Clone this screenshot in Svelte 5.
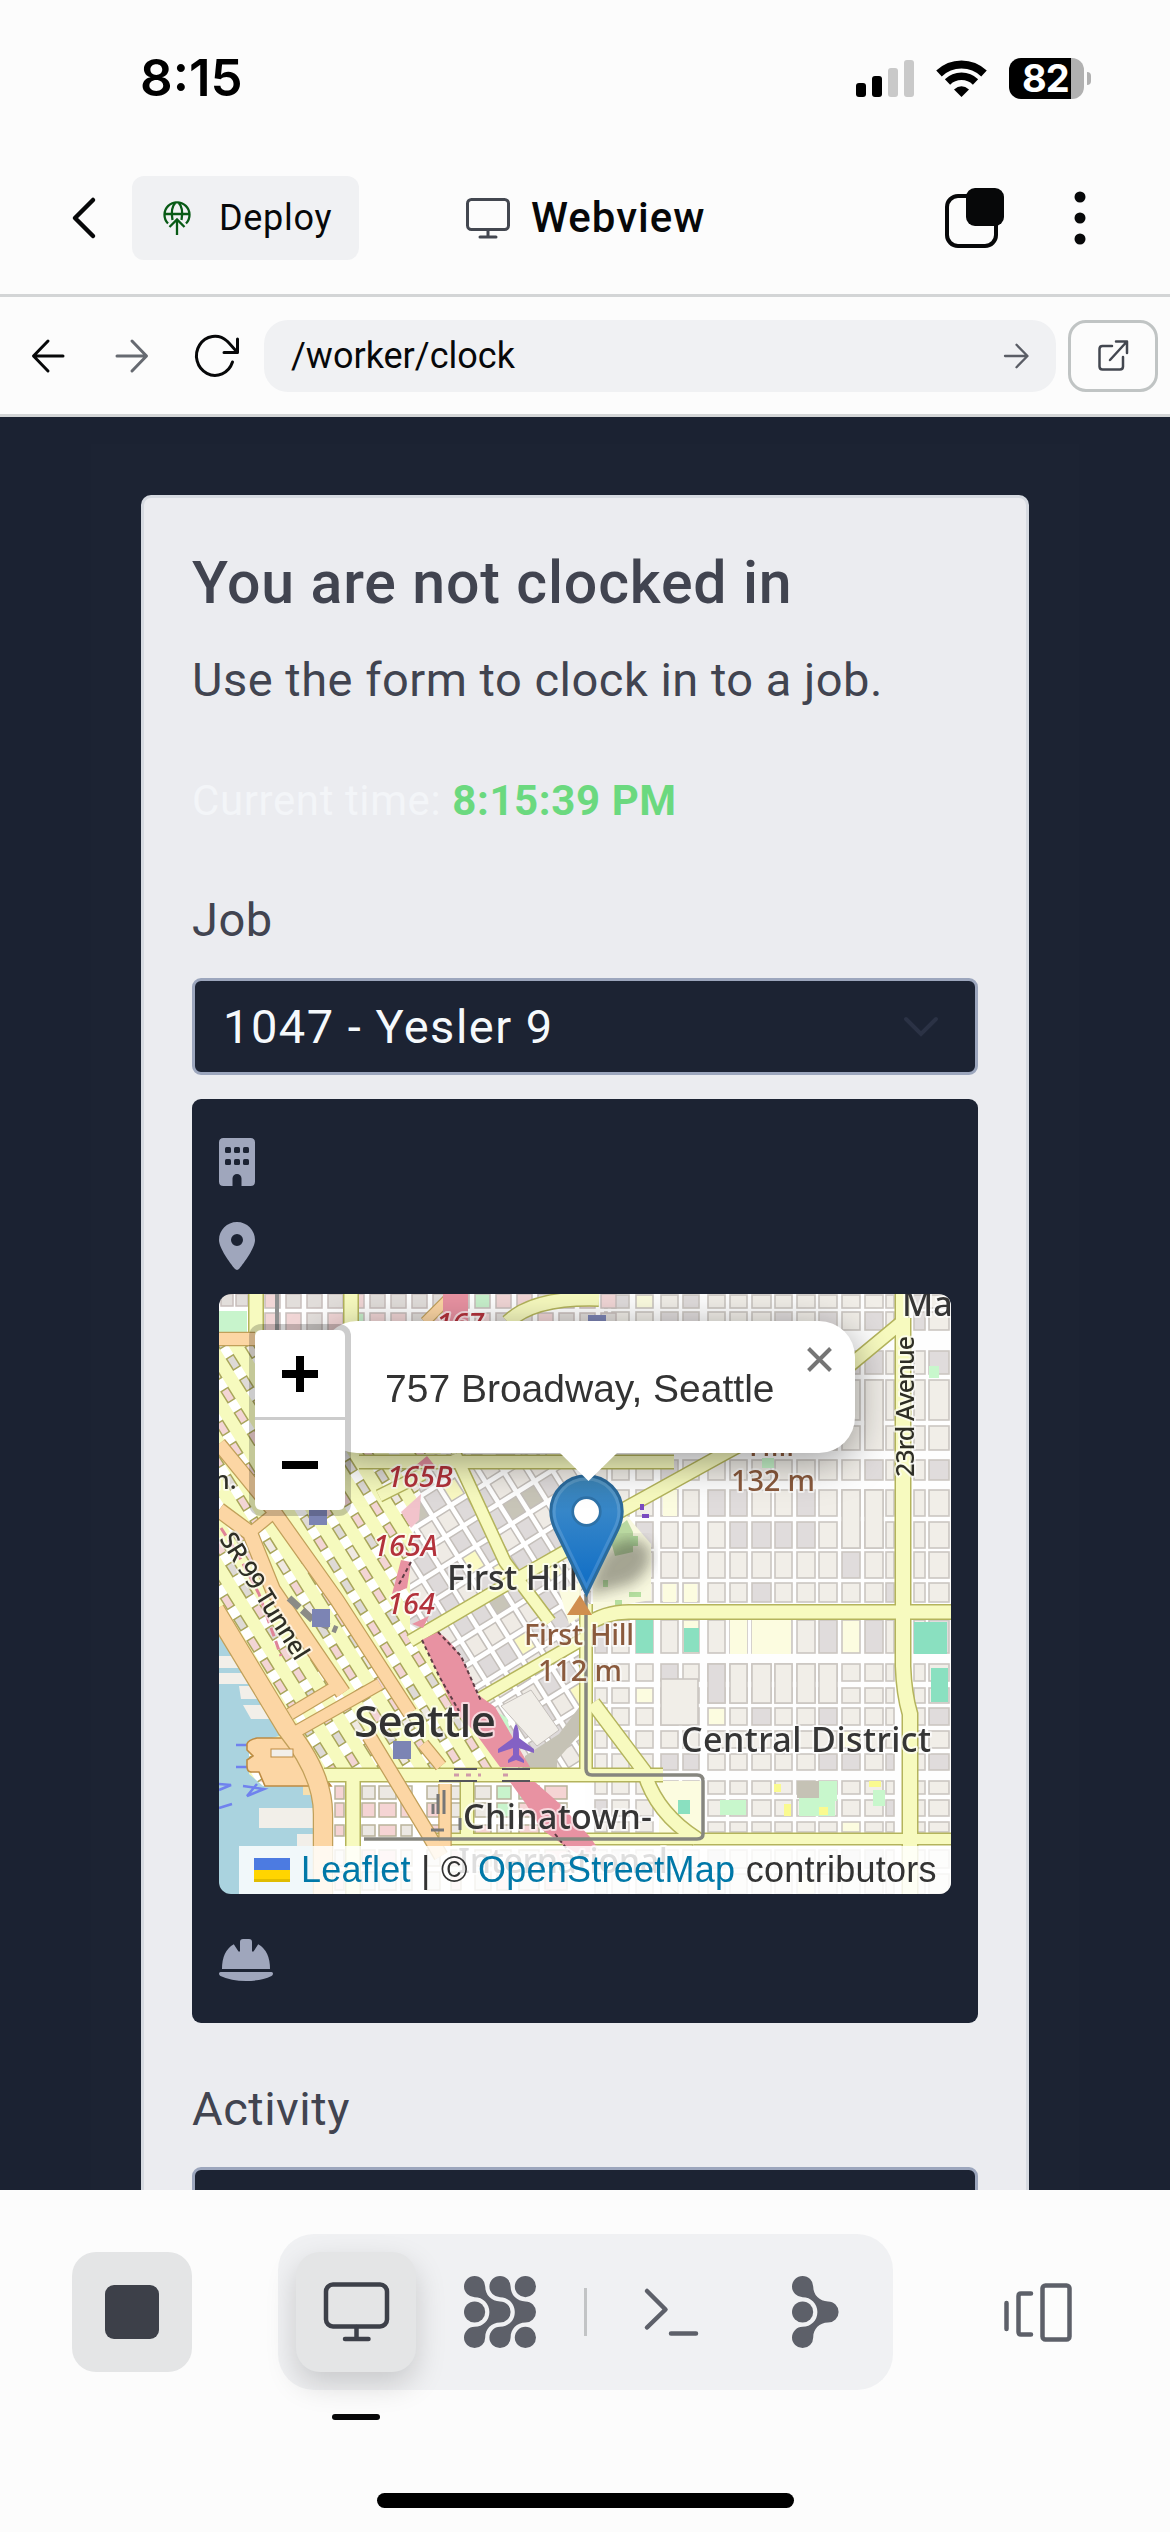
<script>
  // Deterministic pseudo random numbers keep the city blocks stable between renders.
  function rng(seed) {
    let s = seed;
    return () => {
      s = (s * 16807) % 2147483647;
      return s / 2147483647;
    };
  }

  const eastCols = [[376,12],[393,17],[417,17],[442,17],[464,16],[489,17],[511,17],[533,19],[556,17],[578,18],[600,18],[623,18],[646,18],[667,8],[695,11],[710,20]];
  const eastRows = [[1,13],[18,18],[57,23],[86,40],[132,24],[166,20],[196,26],[228,26],[258,26],[289,19],[326,33],[370,17],[394,15],[414,17],[437,17],[460,16],[487,13],[506,16],[528,10],[556,18],[580,20]];
  const r1 = rng(77);
  const eastBlocks = eastRows.flatMap(([y, h]) =>
    eastCols.map(([x, w]) => {
      const n = r1();
      return { x, y, w, h, fill: n < 0.17 ? '#e0dcdc' : n < 0.2 ? '#fcfce0' : '#f1eee8' };
    })
  );
  // Taller city blocks that span two rows.
  const longBlocks = [[442,385,37,46],[489,370,17,39],[511,370,17,39],[533,370,19,39],[556,370,17,39],[578,370,18,39],[600,370,18,39],[623,196,18,58],[646,196,18,58],[600,86,18,66],[646,86,18,70]];

  const r2 = rng(4242);
  const downtownBlocks = [];
  const avenues = [];
  for (let w = -260; w < 330; w += 22) {
    avenues.push(w);
    for (let u = -330; u < 330; u += 25) {
      const n = r2();
      downtownBlocks.push({ x: w + 4, y: u + 5, w: 8, h: 13, fill: n < 0.6 ? '#f3d5d5' : n < 0.85 ? '#dedad6' : '#efe9e2' });
    }
  }

  const r3 = rng(99);
  const hillBlocks = [];
  for (let w = -220; w < 240; w += 21) {
    for (let u = -240; u < 260; u += 24) {
      const n = r3();
      hillBlocks.push({ x: w, y: u, w: 15, h: 18, fill: n < 0.5 ? '#dedada' : n < 0.88 ? '#efebe5' : n < 0.94 ? '#c8c5b8' : '#fbfac4' });
    }
  }

  const r4 = rng(31);
  const northBlocks = [];
  for (let x = 46; x < 385; x += 21) {
    for (const [y, h] of [[0, 14], [19, 20]]) {
      const n = r4();
      northBlocks.push({ x, y, w: 15, h, fill: n < 0.3 ? '#f1d6d6' : n < 0.94 ? '#e2dedb' : '#c8f0cc' });
    }
  }

  const r5 = rng(58);
  const southBlocks = [];
  for (const [y, h] of [[492, 13], [509, 14], [531, 11], [556, 16], [578, 18]]) {
    for (const [x, w] of [[116, 9], [143, 13], [160, 17], [182, 11], [208, 13], [232, 10], [256, 16], [278, 14], [300, 20], [326, 22]]) {
      const n = r5();
      southBlocks.push({ x, y, w, h, fill: n < 0.35 ? '#f5d4d4' : n < 0.45 ? '#c8f4cc' : '#ece8e3' });
    }
  }

  const yellowRoads = [
    { d: 'M37 0V40', w: 13 }, { d: 'M132 0V36', w: 13 },
    { d: 'M289 28Q315 3 380 5', w: 13 },
    { d: 'M140 168H455', w: 12 },
    { d: 'M398 219L501 162L560 130', w: 12 },
    { d: 'M630 72L683 28V0', w: 12 },
    { d: 'M160 202L204 180', w: 11 },
    { d: 'M191 347L278 296L350 255', w: 11 },
    { d: 'M262 404L366 344', w: 11 },
    { d: 'M236 160L286 268L331 328', w: 11 },
    { d: 'M366 332Q385 318 410 318H732', w: 13 },
    { d: 'M367 310V482', w: 11 },
    { d: 'M105 481H444', w: 12 },
    { d: 'M374 409L425 477Q436 518 478 545', w: 13 },
    { d: 'M215 545H732', w: 10 },
    { d: 'M134 478V600', w: 13 }, { d: 'M248 488V545', w: 12 },
    { d: 'M684 24V372Q685 400 691 420V600', w: 14 }
  ];
  const orangeRoads = [
    { d: 'M0 45H36', w: 12 },
    { d: 'M0 150L54 216L118 306L191 419', w: 13 },
    { d: 'M0 216L31 239L54 296L124 399', w: 14 },
    { d: 'M31 239L54 220', w: 10 },
    { d: 'M71 420L118 392', w: 11 }, { d: 'M78 437L161 390', w: 11 },
    { d: 'M-4 316L68 435Q104 480 104 520V600', w: 18 },
    { d: 'M150 442L208 538L222 562', w: 13 },
    { d: 'M204 450L222 472M226 490V552', w: 11 },
    { d: 'M206 28L232 2', w: 9 }
  ];
  const poiSquares = [[90,216,18,15],[93,315,18,18],[174,447,18,18],[369,21,18,8]];
  const greens = [
    ['#8ae0c0',417,325,17,34],['#8ae0c0',465,334,15,24],['#8ae0c0',695,328,33,32],['#8ae0c0',712,374,17,34],
    ['#fcfce0',533,325,39,35],['#fcfce0',511,326,17,34],['#fcfce0',440,487,42,52],['#8ae0c0',459,506,12,14],
    ['#c8f7cc',501,506,26,15],['#c5c2b5',578,487,22,17],['#c8f7cc',580,504,36,18],['#c8f7cc',600,487,18,20],
    ['#c8f7cc',654,496,12,16],['#c8f4cc',0,17,28,21],['#c8f7cc',710,72,10,12],['#c8f7cc',543,164,12,10],
    ['#fafa90',555,490,7,8],['#fafa90',565,510,7,12],['#fafa90',600,513,9,8],['#fafa90',650,487,12,6],
    ['#fcfce0',444,196,14,26],['#fcfce0',444,290,13,18],['#fcfce0',465,290,13,18]
  ];
</script>

<svelte:head><title>Webview</title></svelte:head>

{#snippet cluster(x)}
  <path transform={`translate(${x} 0)`} d="M10.6 0A10.6 10.6 0 0 1 21.2 10.6C21.2 19 27.5 25.4 36 25.4A10.6 10.6 0 0 1 36 46.6C27.5 46.6 21.2 53 21.2 61.4A10.6 10.6 0 1 1 10.6 50.8C19 50.8 25.4 44.5 25.4 36C25.4 27.5 19 21.2 10.6 21.2A10.6 10.6 0 0 1 10.6 0Z" />
{/snippet}

<div class="screen">
  <header class="status">
    <span class="time">8:15</span>
    <div class="status-icons">
      <svg class="signal" viewBox="0 0 58 37"><rect y="23" width="10" height="14" rx="3"/><rect x="16" y="16" width="10" height="21" rx="3"/><rect x="32" y="8" width="10" height="29" rx="3" fill="#c9c9c9"/><rect x="48" width="10" height="37" rx="3" fill="#c9c9c9"/></svg>
      <svg class="wifi" viewBox="0 0 51 37" fill="none" stroke="#000"><path d="M3 13.500A32.500 32.500 0 0 1 48 13.500" stroke-width="8"/><path d="M11.500 22A20 20 0 0 1 39.500 22" stroke-width="7.500"/><path d="M18 29.500Q25.500 23 33 29.500L25.500 37Z" fill="#000" stroke="none"/></svg>
      <div class="battery"><div class="cell"><span>82</span></div><i></i></div>
    </div>
  </header>

  <nav class="appbar">
    <svg class="back" viewBox="0 0 24 42"><path d="M21 3L3 21L21 39" /></svg>
    <button class="deploy">
      <svg viewBox="0 0 28 36"><path d="M5 23.500A12.500 12.500 0 1 1 23 23.500M1.500 14H26.500M9.500 20Q7 8 13 2M18.500 20Q21 8 15 2M14 35V20M6.500 27L14 19.500L21.500 27" /></svg>
      <span>Deploy</span>
    </button>
    <div class="tab-title">
      <svg viewBox="0 0 44 42"><rect x="1.500" y="2.500" width="41" height="30" rx="4"/><path d="M22 33V40M14 40H30"/></svg>
      <span>Webview</span>
    </div>
    <svg class="copies" viewBox="0 0 60 60"><rect x="2" y="8" width="49" height="50" rx="11" fill="none" stroke="#070809" stroke-width="4"/><rect x="21" width="38" height="38" rx="9" fill="#070809"/></svg>
    <svg class="dots" viewBox="0 0 12 54"><circle cx="6" cy="6" r="5.500"/><circle cx="6" cy="27" r="5.500"/><circle cx="6" cy="48" r="5.500"/></svg>
  </nav>

  <div class="urlbar">
    <svg class="arrow" viewBox="0 0 32 32"><path d="M31 16H2M16 1L1.500 16L16 31" /></svg>
    <svg class="arrow forward" viewBox="0 0 32 32"><path d="M1 16H30M16 1L30.500 16L16 31" /></svg>
    <svg class="reload" viewBox="0 0 44 42"><path d="M37.500 27A18.500 19.500 0 1 1 32 6Q35 9 42 17M42.500 4V17.500H29" /></svg>
    <div class="address"><span>/worker/clock</span>
      <svg viewBox="0 0 24 24"><path d="M0 12H22M11.500 0.800L22.500 12L11.500 23.200" /></svg>
    </div>
    <button class="external" aria-label="Open in new tab"><svg viewBox="0 0 30 32"><path d="M14 6H4.500Q1.500 6 1.500 9V26.500Q1.500 29.500 4.500 29.500H22Q25 29.500 25 26.500V17M12 20L28 2.500M18 1.500H29V13" /></svg></button>
  </div>

  <main class="viewport">
    <div class="backdrop">
      <section class="card">
        <h1>You are not clocked in</h1>
        <p class="lead">Use the form to clock in to a job.</p>
        <p class="clock">Current time: <b>8:15:39 PM</b></p>
        <p class="label">Job</p>
        <div class="select"><span>1047 - Yesler 9</span><svg viewBox="0 0 34 20"><path d="M2 2L17 17L32 2" /></svg></div>

        <div class="panel">
          <svg class="building" viewBox="0 0 36 48"><path fill-rule="evenodd" d="M4.500 0H31.500Q36 0 36 4.500V43.500Q36 48 31.500 48H22.500V40.500A4.500 4.500 0 0 0 13.500 40.500V48H4.500Q0 48 0 43.500V4.500Q0 0 4.500 0Z"/><g fill="#1c2333"><rect x="6" y="9" width="6" height="6" rx="1.500"/><rect x="15" y="9" width="6" height="6" rx="1.500"/><rect x="24" y="9" width="6" height="6" rx="1.500"/><rect x="6" y="21" width="6" height="6" rx="1.500"/><rect x="15" y="21" width="6" height="6" rx="1.500"/><rect x="24" y="21" width="6" height="6" rx="1.500"/></g></svg>
          <svg class="pin" viewBox="0 0 384 512"><path fill-rule="evenodd" d="M215.700 499.200C267 435 384 279.400 384 192C384 86 298 0 192 0S0 86 0 192c0 87.400 117 243 168.300 307.200 12.300 15.300 35.100 15.300 47.400 0zM192 128a64 64 0 1 1 0 128 64 64 0 1 1 0-128z"/></svg>

          <div class="map">
            <svg class="tiles" viewBox="0 0 732 600">
              <defs>
                <clipPath id="downtown"><path d="M0 38H236V160L204 165L191 270V335L204 346L254 436L300 488H0Z"/></clipPath>
                <clipPath id="hill"><path d="M204 160H372V475H300L215 345L191 330V270Z"/></clipPath>
                <linearGradient id="pinFill" x1="0" y1="0" x2="0" y2="1"><stop offset="0" stop-color="#3c84b5"/><stop offset=".3" stop-color="#3686c8"/><stop offset=".85" stop-color="#1571c6"/></linearGradient>
                <filter id="soft"><feGaussianBlur stdDeviation="7"/></filter>
                <filter id="fuzz"><feGaussianBlur stdDeviation=".7"/></filter>
              </defs>
              <g filter="url(#fuzz)">
              <rect width="732" height="600" fill="#fefefe"/>
              <g stroke="#cbc6c1" stroke-width="1.600">
                {#each eastBlocks as b}<rect x={b.x} y={b.y} width={b.w} height={b.h} fill={b.fill}/>{/each}
                {#each longBlocks as [x, y, w, h], i}<rect {x} {y} width={w} height={h} fill={i === 1 ? '#e0dcdc' : '#f1eee8'}/>{/each}
              </g>
              <g clip-path="url(#downtown)">
                <rect width="320" height="490" fill="#f6fabe"/>
                <g transform="translate(120 260) rotate(-32)">
                  {#each avenues as a}
                    <path d={`M${a + 8} -337V330`} stroke="#fff" stroke-width="9" stroke-dasharray="12 13"/>
                  {/each}
                  <g stroke="#a9a65c" stroke-width="1.500">
                    {#each downtownBlocks as b}<rect x={b.x} y={b.y} width={b.w} height={b.h} fill={b.fill}/>{/each}
                  </g>
                </g>
              </g>
              <g clip-path="url(#hill)">
                <rect x="180" y="150" width="270" height="340" fill="#fff"/>
                <g transform="translate(290 320) rotate(-32)" stroke="#c4bfba" stroke-width="1.500">
                  {#each hillBlocks as b}<rect x={b.x} y={b.y} width={b.w} height={b.h} fill={b.fill}/>{/each}
                </g>
                <path d="M282 412L312 396L340 436L318 452Z" fill="#f1eee8" stroke="#c4bfba"/>
                <path d="M306 462L340 440L361 412V440L338 466V475H306Z" fill="#c5c2b5"/>
                <path d="M278 418L288 424L292 440L282 436Z" fill="#c8f7cc"/>
                <path d="M340 296L362 288V322L350 330Z" fill="#fcfce0"/>
              </g>
              <path d="M374 222L402 215L432 250V306L374 316Z" fill="#f8f8df"/>
              <path d="M390 240L408 226L414 238V258L396 262Z" fill="#b9d8a0"/>
              <g fill="#b5dfa0"><rect x="411" y="242" width="8" height="10"/><rect x="384" y="286" width="5" height="7"/><rect x="410" y="298" width="12" height="5"/><rect x="396" y="306" width="7" height="5"/></g>
              <path d="M0 0H385V38H0Z" fill="#fff"/>
              <g stroke="#c8bebc" stroke-width="1.500">
                {#each northBlocks as b}<rect x={b.x} y={b.y} width={b.w} height={b.h} fill={b.fill}/>{/each}
                <rect x="2" y="0" width="12" height="12" fill="#e2dedb"/><rect x="17" y="0" width="12" height="12" fill="#e2dedb"/>
              </g>
              <path d="M100 488H366V600H100Z" fill="#fff"/>
              <g stroke="#b9b39b" stroke-width="1.500">
                {#each southBlocks as b}<rect x={b.x} y={b.y} width={b.w} height={b.h} fill={b.fill}/>{/each}
              </g>
              {#each greens as [fill, x, y, w, h]}<rect {fill} {x} {y} width={w} height={h}/>{/each}

              <path d="M0 335L68 440L30 450V480L44 492H95V600H0Z" fill="#aad3df"/>
              <g fill="#f2efe9"><path d="M0 362H20L24 374H0ZM0 379H28L32 390H0ZM20 392H40L50 405H22ZM24 411H50L57 425H32ZM40 514H94V534H40ZM78 540H94V552H78Z"/><path d="M84 492H94V501H84Z" fill="#f7dfae"/></g>
              <g stroke="#6f82ee" stroke-width="2.500" fill="none"><path d="M17 451H30M17 473H30M0 490L12 491L0 496M24 492L45 495L28 502L38 490M0 514L13 510"/></g>
              <path d="M38 444H76L112 492H46L40 478H32Q28 478 28 472V466L34 462L28 456V450Q29 446 38 444Z" fill="#fcd6a4" stroke="#bd8b42" stroke-width="1.600"/>
              <path d="M96 504V600" stroke="#e38ca0" stroke-width="3"/>

              <g fill="none">
                {#each yellowRoads as r}<path d={r.d} stroke="#b4b45c" stroke-width={r.w + 3}/>{/each}
                {#each yellowRoads as r}<path d={r.d} stroke="#f7fabf" stroke-width={r.w}/>{/each}
                {#each orangeRoads as r}<path d={r.d} stroke="#c1a05a" stroke-width={r.w + 2.5}/>{/each}
                {#each orangeRoads as r}<path d={r.d} stroke="#fcd6a4" stroke-width={r.w}/>{/each}
              </g>
              <rect x="52" y="455" width="22" height="8" fill="#f2efe9" stroke="#bd8b42"/>
              <g fill="#e892a2">
                <path d="M224 0H249V28H224ZM196 172L208 162L216 172ZM173 300L182 266L192 268L188 294ZM193 330L210 322L204 334Z"/>
                <path d="M203 346L219 338Q242 352 258 400L276 413L311 473H281L254 436L236 418L220 382Z"/>
                <path d="M291 488H316L341 510L371 543L380 556L368 566L346 552L322 535L307 510Z"/>
              </g>
              <path d="M202 200L182 218L192 234L200 226Z" fill="#f2c3cb"/>
              <path d="M203 346L220 382L240 417M219 338L242 362L262 407M180 290L192 268M336 540L352 560" stroke="#5e3d44" stroke-width="2" stroke-dasharray="4 3" fill="none"/>
              <path d="M58 0V36" stroke="#8f9090" stroke-width="4"/>
              <path d="M235 475H258M283 475H311M220 487H258M283 487H311" stroke="#55555a" stroke-width="2"/>
              <path d="M235 481H262M284 481H290" stroke="#cf9aa9" stroke-width="3" stroke-dasharray="5 7"/>
              <path d="M367 300V475Q367 481 373 481H478Q484 481 484 487V540Q484 545 478 545H145" fill="none" stroke="#86867f" stroke-width="3.500"/>
              <path d="M214 510V520M219 500V520M225 496V520M212 536H225M241 524V536" stroke="#777" stroke-width="3"/>
              <path d="M2 234L20 262L40 300L62 362" stroke="#df8497" stroke-width="3" stroke-dasharray="9 5" fill="none"/>
              <path d="M70 304L94 326L118 336" stroke="#8b8b86" stroke-width="7" stroke-dasharray="14 4" fill="none"/>
              <path d="M423 210V216M423 222H430" stroke="#7a4cc0" stroke-width="4"/>
              </g>
              {#each poiSquares as [x, y, w, h]}<rect {x} {y} width={w} height={h} fill="#7c84b4"/>{/each}
              <path d="M297 430Q300 433 300 444L315 455V459L300 454V461L305 466V469L297 466L289 469V466L294 461V454L279 459V455L294 444Q294 433 297 430Z" fill="#8461c4"/>
              <path d="M361 301L373 321H348Z" fill="#d08f4f"/>

              <g class="halo" filter="url(#fuzz)">
                <text x="135" y="443" font-size="44" textLength="142" fill="#333">Seattle</text>
                <g font-size="34" fill="#363636">
                  <text x="228" y="296" textLength="131">First Hill</text>
                  <text x="462" y="458" textLength="250">Central District</text>
                  <text x="244" y="535" textLength="189">Chinatown-</text>
                  <text x="239" y="579" textLength="210">International</text>
                  <text x="683" y="22">Ma</text>
                </g>
                <g font-size="29" fill="#8a5a3c">
                  <text x="305" y="351" textLength="110">First Hill</text>
                  <text x="319" y="387" textLength="84">112 m</text>
                  <text x="512" y="197" textLength="84">132 m</text>
                  <text x="530" y="162">Hill</text>
                </g>
                <g font-size="29" fill="#b3303b" font-style="italic">
                  <text x="217" y="40">167</text><text x="168" y="193">165B</text><text x="154" y="262">165A</text><text x="168" y="320">164</text>
                </g>
                <g font-size="25" fill="#2f2f25">
                  <text transform="translate(695 183) rotate(-90)" textLength="141">23rd Avenue</text>
                  <text transform="translate(0 245) rotate(58)" textLength="145">SR 99 Tunnel</text>
                  <text x="-5" y="195">n.</text>
                </g>
              </g>
              <path d="M367 302L382 262Q405 236 428 250Q440 272 412 290Z" fill="#30302a" opacity=".42" filter="url(#soft)"/>
              <g transform="translate(330 180) scale(3)">
                <path d="M12.500 .6C5.900 .6 .6 5.800 .6 12.500C.6 14.600 1.300 16.900 2.200 18.800L12.500 40L22.800 18.800C23.700 16.900 24.400 14.600 24.400 12.500C24.400 5.800 19.100 .6 12.500 .6Z" fill="url(#pinFill)" stroke="#2b6b9d"/>
                <path d="M12.500 1.700C6.500 1.700 1.700 6.400 1.700 12.500C1.700 14.400 2.300 16.500 3.200 18.300L12.500 37.500L21.800 18.300C22.700 16.500 23.300 14.400 23.300 12.500C23.300 6.400 18.500 1.700 12.500 1.700Z" fill="none" stroke="#fff" stroke-opacity=".14"/>
                <circle cx="12.500" cy="12.500" r="4.600" fill="#fff" stroke="#2e72a8" stroke-width=".9"/>
              </g>
            </svg>
            <div class="popup">
              <span>757 Broadway, Seattle</span>
              <svg class="close" viewBox="0 0 25 25"><path d="M1.500 1.500L23.500 23.500M23.500 1.500L1.500 23.500"/></svg>
              <i></i>
            </div>
            <div class="zoom">
              <button aria-label="Zoom in"><svg viewBox="0 0 36 36"><path d="M18 0V36M0 18H36"/></svg></button>
              <button aria-label="Zoom out"><svg viewBox="0 0 36 36"><path d="M0 18H36"/></svg></button>
            </div>
            <div class="attribution">
              <svg viewBox="0 0 12 8"><path fill="#4c7be1" d="M0 0h12v4H0z"/><path fill="#ffd500" d="M0 4h12v3H0z"/><path fill="#e0bc00" d="M0 7h12v1H0z"/></svg>
              <span><em>Leaflet</em> | © <em>OpenStreetMap</em> contributors</span>
            </div>
          </div>

          <svg class="hat" viewBox="0 0 54 48"><path d="M21 6Q21 3 24 3H30Q33 3 33 6V15.500H34.500L39.200 8.300Q51 15 51 33H3Q3 15 14.800 8.300L19.500 15.500H21ZM1.500 36H52.500Q54 36 54 37.500Q54 39 52.500 40Q42 45 27 45T1.500 40Q0 39 0 37.500Q0 36 1.500 36Z"/></svg>
        </div>

        <p class="label activity">Activity</p>
        <div class="select"></div>
      </section>
    </div>
  </main>

  <footer>
    <div class="dock">
      <button class="stop" aria-label="Stop"><i></i></button>
      <div class="tools">
        <button class="active" aria-label="Webview"><svg class="monitor" viewBox="0 0 65 60"><rect x="2" y="2.500" width="61" height="42" rx="7"/><path d="M32.500 45V57M21 57H44.500"/></svg><i></i></button>
        <button aria-label="Tools"><svg class="grid" viewBox="0 0 72 72">{@render cluster(0)}{@render cluster(25.4)}<circle cx="10.600" cy="36" r="10.600"/><circle cx="61.400" cy="10.600" r="10.600"/><circle cx="61.400" cy="61.400" r="10.600"/></svg></button>
        <hr />
        <button aria-label="Shell"><svg class="shell" viewBox="0 0 53 48"><path d="M2 3L20.500 21.500L2 39.500M26 45.500H51"/></svg></button>
        <button aria-label="Agent"><svg class="agent" viewBox="0 0 47 72">{@render cluster(0)}<circle cx="10.600" cy="36" r="10.600"/></svg></button>
      </div>
      <svg class="switcher" viewBox="0 0 68 60"><rect x="38.500" y="3.500" width="27" height="54" rx="3"/><path d="M27 11.500H17Q14.500 11.500 14.500 14V50Q14.500 52.500 17 52.500H27M2.500 21V47"/></svg>
    </div>
    <div class="home"></div>
  </footer>
</div>

<style>
  :global(body) { margin: 0; background: #fcfcfc; }
  .screen { width: 1170px; height: 2532px; display: flex; flex-direction: column; overflow: hidden; background: #fcfcfc; color: #070809; font-family: Roboto, "Noto Sans", sans-serif; box-sizing: border-box; }
  .screen * { box-sizing: border-box; }
  svg { display: block; flex: none; overflow: visible; }
  button { border: 0; background: none; padding: 0; margin: 0; font: inherit; color: inherit; display: flex; align-items: center; justify-content: center; flex: none; }
  p, h1 { margin: 0; white-space: nowrap; }

  .status { height: 156px; flex: none; display: flex; justify-content: space-between; align-items: center; padding: 0 79px 0 140px; }
  .time { font: 600 51px/60px Inter, sans-serif; color: #000; }
  .status-icons { display: flex; align-items: center; gap: 22px; }
  .signal { width: 58px; height: 37px; }
  .wifi { width: 51px; height: 37px; }
  .battery { display: flex; align-items: center; gap: 3px; }
  .cell { width: 75px; height: 41px; border-radius: 12px; background: linear-gradient(90deg, #000 62px, #b1b1b1 62px); color: #fff; font: 700 38px/41px Inter, sans-serif; padding-left: 13px; letter-spacing: -1px; }
  .battery i { width: 4px; height: 13px; background: #b1b1b1; border-radius: 0 5px 5px 0; }

  .appbar { height: 141px; flex: none; border-bottom: 3px solid #d3d5d6; display: flex; align-items: center; padding: 0 84px 15px 72px; }
  .back { width: 24px; height: 42px; fill: none; stroke: #070809; stroke-width: 4.5; stroke-linecap: round; stroke-linejoin: round; }
  .deploy { width: 227px; height: 84px; margin-left: 36px; background: #f0f1f3; border-radius: 12px; font-size: 36px; justify-content: flex-start; padding-left: 31px; gap: 28px; letter-spacing: .7px; }
  .deploy svg { width: 28px; height: 36px; fill: none; stroke: #085a15; stroke-width: 2.3; }
  .tab-title { display: flex; align-items: center; gap: 21px; margin-left: 107px; font-size: 42px; font-weight: 500; }
  .tab-title svg { width: 44px; height: 42px; fill: none; stroke: #434750; stroke-width: 3; stroke-linecap: round; }
  .tab-title span { width: 174px; letter-spacing: 1px; }
  .copies { width: 60px; height: 60px; margin-left: auto; }
  .dots { width: 12px; height: 54px; margin-left: 69px; fill: #070809; }

  .urlbar { height: 120px; flex: none; border-bottom: 3px solid #d3d5d6; display: flex; align-items: center; padding: 0 12px 0 32px; }
  .urlbar svg { fill: none; stroke: #070809; stroke-width: 3; stroke-linecap: round; stroke-linejoin: round; }
  .arrow { width: 32px; height: 32px; }
  .urlbar .forward { margin-left: 52px; stroke: #666a71; }
  .reload { width: 44px; height: 42px; margin-left: 47px; }
  .address { width: 792px; height: 72px; margin-left: 25px; border-radius: 24px; background: #f0f1f3; display: flex; align-items: center; justify-content: space-between; padding: 0 27px 0 27px; font-size: 36px; }
  .urlbar .address svg { width: 24px; height: 24px; stroke: #5a5d65; stroke-width: 2.3; }
  .external { width: 90px; height: 72px; margin-left: 12px; border: 3px solid #c0c4c4; border-radius: 18px; }
  .urlbar .external svg { width: 30px; height: 32px; stroke: #434750; stroke-width: 2.5; }

  .viewport { height: 1773px; flex: none; background: #1b2232; overflow: hidden; padding: 27px 91px 0; }
  .backdrop { background: #1c2333; padding: 51px 50px 0; height: 1773px; }
  .card { width: 888px; height: 1780px; border: 3px solid #d6dae1; border-radius: 10px; background: #ebecf0; padding: 49px 48px 0; color: #414450; }
  h1 { font-size: 59px; line-height: 72px; font-weight: 500; letter-spacing: .85px; }
  .lead { font-size: 47px; line-height: 60px; margin-top: 31px; letter-spacing: .5px; }
  .clock { font-size: 42px; line-height: 48px; margin-top: 67px; color: #f3f5f8; letter-spacing: .6px; }
  .clock b { color: #6bd97f; font-weight: 700; }
  .label { font-size: 47px; line-height: 60px; margin-top: 65px; letter-spacing: .5px; }
  .activity { margin-top: 56px; }
  .select { height: 97px; margin-top: 28px; border: 3px solid #9ca6bd; border-radius: 9px; background: #1c2333; color: #f5f9fc; font-size: 47px; letter-spacing: 1.5px; display: flex; align-items: center; justify-content: space-between; padding: 0 37px 0 28px; }
  .select svg { width: 34px; height: 20px; fill: none; stroke: #2b3245; stroke-width: 4; stroke-linecap: round; }
  .panel { height: 924px; margin-top: 24px; border-radius: 9px; background: #1c2333; padding: 39px 27px 0; }
  .building, .pin { width: 36px; height: 48px; fill: #9fa6bc; }
  .pin { margin-top: 36px; }
  .hat { width: 54px; height: 48px; fill: #9fa6bc; margin-top: 42px; }

  .map { position: relative; width: 732px; height: 600px; margin-top: 24px; border-radius: 12px; overflow: hidden; font-family: "Liberation Sans", Arial, sans-serif; }
  .tiles { width: 732px; height: 600px; font-family: "Noto Sans", sans-serif; font-weight: 500; }
  .halo { paint-order: stroke; stroke: #fff; stroke-width: 4px; stroke-opacity: .65; stroke-linejoin: round; }
  .popup { position: absolute; left: 102px; top: 27px; width: 534px; height: 132px; border-radius: 36px; background: #fff; color: #333; font-size: 39px; line-height: 132px; padding-left: 64px; padding-top: 2px; box-shadow: 0 9px 42px rgba(0,0,0,.4); white-space: nowrap; }
  .close { position: absolute; right: 23px; top: 26px; width: 25px; height: 25px; stroke: #757575; stroke-width: 4; }
  .popup i { position: absolute; left: 236px; top: 129px; width: 63px; height: 31px; background: #fff; clip-path: polygon(0 0, 100% 0, 50% 100%); }
  .zoom { position: absolute; left: 30px; top: 30px; width: 102px; height: 192px; border: 6px solid rgba(0,0,0,.2); border-radius: 12px; background-clip: padding-box; background-color: #fff; }
  .zoom button { width: 90px; height: 90px; }
  .zoom button:first-child { border-bottom: 3px solid #ccc; }
  .zoom svg { width: 36px; height: 36px; stroke: #000; stroke-width: 8; }
  .attribution { position: absolute; right: 0; bottom: 0; width: 712px; height: 48px; padding: 0 15px; background: rgba(255,255,255,.84); color: #333; font-size: 36px; line-height: 48px; display: flex; align-items: center; gap: 11px; white-space: nowrap; letter-spacing: .25px; }
  .attribution svg { width: 36px; height: 24px; }
  .attribution em { font-style: normal; color: #0078a8; }

  footer { flex: 1; padding-top: 44px; display: flex; flex-direction: column; align-items: center; }
  .dock { width: 1170px; height: 156px; padding: 0 98px 0 72px; display: flex; align-items: center; }
  .stop { width: 120px; height: 120px; background: #e4e5e6; border-radius: 24px; }
  .stop i { width: 54px; height: 54px; border-radius: 9px; background: #3d4049; }
  .tools { width: 615px; height: 156px; margin-left: 86px; padding: 0 18px; border-radius: 36px; background: #f0f1f3; display: flex; align-items: center; gap: 24px; }
  .tools button { width: 120px; height: 120px; border-radius: 24px; position: relative; }
  .tools .active { background: #e4e5e6; box-shadow: 0 12px 30px rgba(0,0,0,.17); }
  .active i { position: absolute; left: 36px; bottom: -48px; width: 48px; height: 6px; border-radius: 3px; background: #070809; }
  .tools svg { fill: #5d6069; }
  .tools .monitor, .tools .shell, .switcher { fill: none; stroke: #5d6069; stroke-width: 4.5; stroke-linecap: round; stroke-linejoin: round; }
  .tools .monitor { width: 65px; height: 60px; stroke: #3d4049; }
  .grid { width: 72px; height: 72px; }
  hr { width: 3px; height: 48px; margin: 0; border: 0; background: #c2c4c5; }
  .shell { width: 53px; height: 48px; }
  .agent { width: 47px; height: 72px; }
  .switcher { width: 68px; height: 60px; margin-left: auto; }
  .home { width: 417px; height: 15px; border-radius: 8px; background: #000; margin-top: 103px; }
</style>
